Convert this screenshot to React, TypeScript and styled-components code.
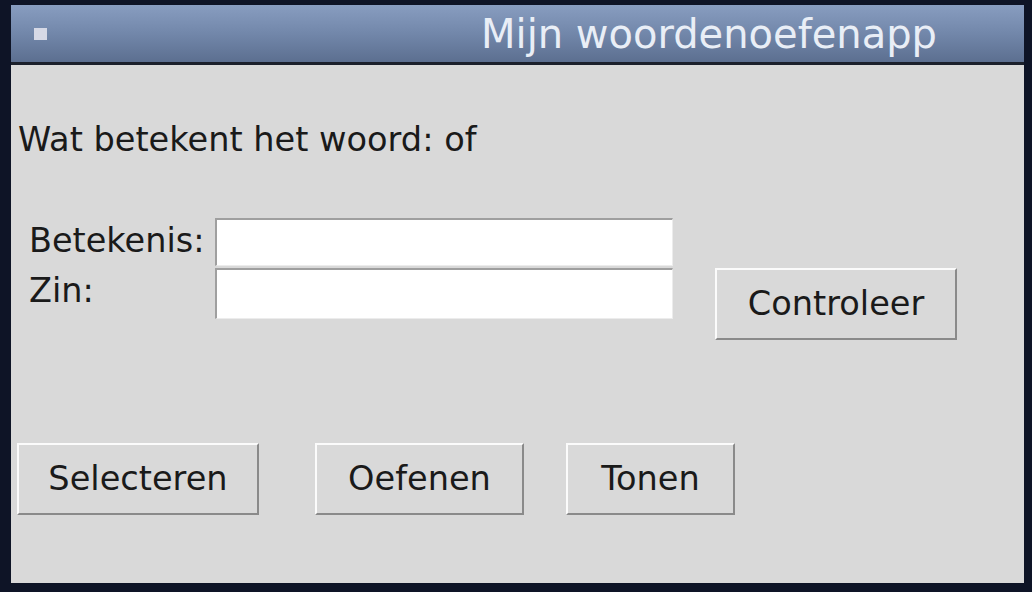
import React from 'react';
import styled, { createGlobalStyle } from 'styled-components';

const GlobalStyle = createGlobalStyle`
    html, body {
        margin: 0;
        padding: 0;
        background: #0e1426;
    }
    body {
        font-family: "DejaVu Sans", "Liberation Sans", sans-serif;
    }
`;

const Desktop = styled.div`
    width: 1032px;
    height: 592px;
    box-sizing: border-box;
    padding: 5px 8px 0 11px;
    background: #0e1426;
    overflow: hidden;
`;

const Window = styled.div`
    width: 1013px;
    display: flex;
    flex-direction: column;
`;

const TitleBar = styled.div`
    height: 57px;
    display: flex;
    align-items: center;
    background: linear-gradient(to bottom, #889dc0 0%, #7287aa 50%, #5c6f90 100%);
    border-bottom: 3px solid #1b202b;
`;

const WindowIcon = styled.div`
    width: 13px;
    height: 12px;
    margin-left: 23px;
    background: #d6d9e6;
`;

const Title = styled.div`
    margin-left: 434px;
    font-size: 40px;
    color: #e9eef6;
    white-space: nowrap;
`;

const Body = styled.div`
    height: 518px;
    box-sizing: border-box;
    padding: 56px 0 0 6px;
    background: #d9d9d9;
    color: #1a1a1a;
    display: flex;
    flex-direction: column;
    align-items: flex-start;
`;

const Question = styled.div`
    margin-left: 1px;
    font-size: 33.6px;
    line-height: 38px;
    white-space: nowrap;
`;

const FormGrid = styled.div`
    margin: 59px 0 0 12px;
    display: grid;
    grid-template-columns: 186px 458px 242px;
    grid-template-rows: 48px 72px;
    column-gap: 0;
    row-gap: 2px;
    align-items: start;
`;

const Label = styled.div<{ $row: number }>`
    grid-column: 1;
    grid-row: ${(p) => p.$row};
    padding-top: 4px;
    font-size: 33.5px;
    line-height: 38px;
    white-space: nowrap;
`;

const Entry = styled.input<{ $row: number; $height: number }>`
    grid-column: 2;
    grid-row: ${(p) => p.$row};
    height: ${(p) => p.$height}px;
    box-sizing: border-box;
    margin: 0;
    padding: 0 6px;
    background: #ffffff;
    border-style: solid;
    border-width: 2px 1px 1px 2px;
    border-color: #9f9f9f #ececec #ececec #9f9f9f;
    outline: none;
    font-family: "DejaVu Sans", sans-serif;
    font-size: 28px;
`;

const Button = styled.button<{ $width: number; $gap?: number }>`
    width: ${(p) => p.$width}px;
    height: 72px;
    box-sizing: border-box;
    margin: 0 0 0 ${(p) => p.$gap ?? 0}px;
    padding: 0 0 0 0;
    background: #d9d9d9;
    color: #1a1a1a;
    border-style: solid;
    border-width: 2px;
    border-color: #fbfbfb #8a8a8a #8a8a8a #fbfbfb;
    font-family: "DejaVu Sans", sans-serif;
    font-size: 33.6px;
    line-height: 38px;
    white-space: nowrap;
    cursor: pointer;
`;

const CheckButton = styled(Button)`
    grid-column: 3;
    grid-row: 2;
    margin-left: 42px;
`;

const ButtonRow = styled.div`
    margin-top: 103px;
    display: flex;
    flex-direction: row;
    align-items: center;
`;

const App: React.FC = () => {
    return (
        <>
            <GlobalStyle />
            <Desktop>
                <Window>
                    <TitleBar>
                        <WindowIcon />
                        <Title>Mijn woordenoefenapp</Title>
                    </TitleBar>
                    <Body>
                        <Question>Wat betekent het woord: of</Question>
                        <FormGrid>
                            <Label $row={1}>Betekenis:</Label>
                            <Entry $row={1} $height={48} />
                            <Label $row={2}>Zin:</Label>
                            <Entry $row={2} $height={51} />
                            <CheckButton $width={242}>Controleer</CheckButton>
                        </FormGrid>
                        <ButtonRow>
                            <Button $width={242}>Selecteren</Button>
                            <Button $width={209} $gap={56}>Oefenen</Button>
                            <Button $width={169} $gap={42}>Tonen</Button>
                        </ButtonRow>
                    </Body>
                </Window>
            </Desktop>
        </>
    );
};

export default App;
